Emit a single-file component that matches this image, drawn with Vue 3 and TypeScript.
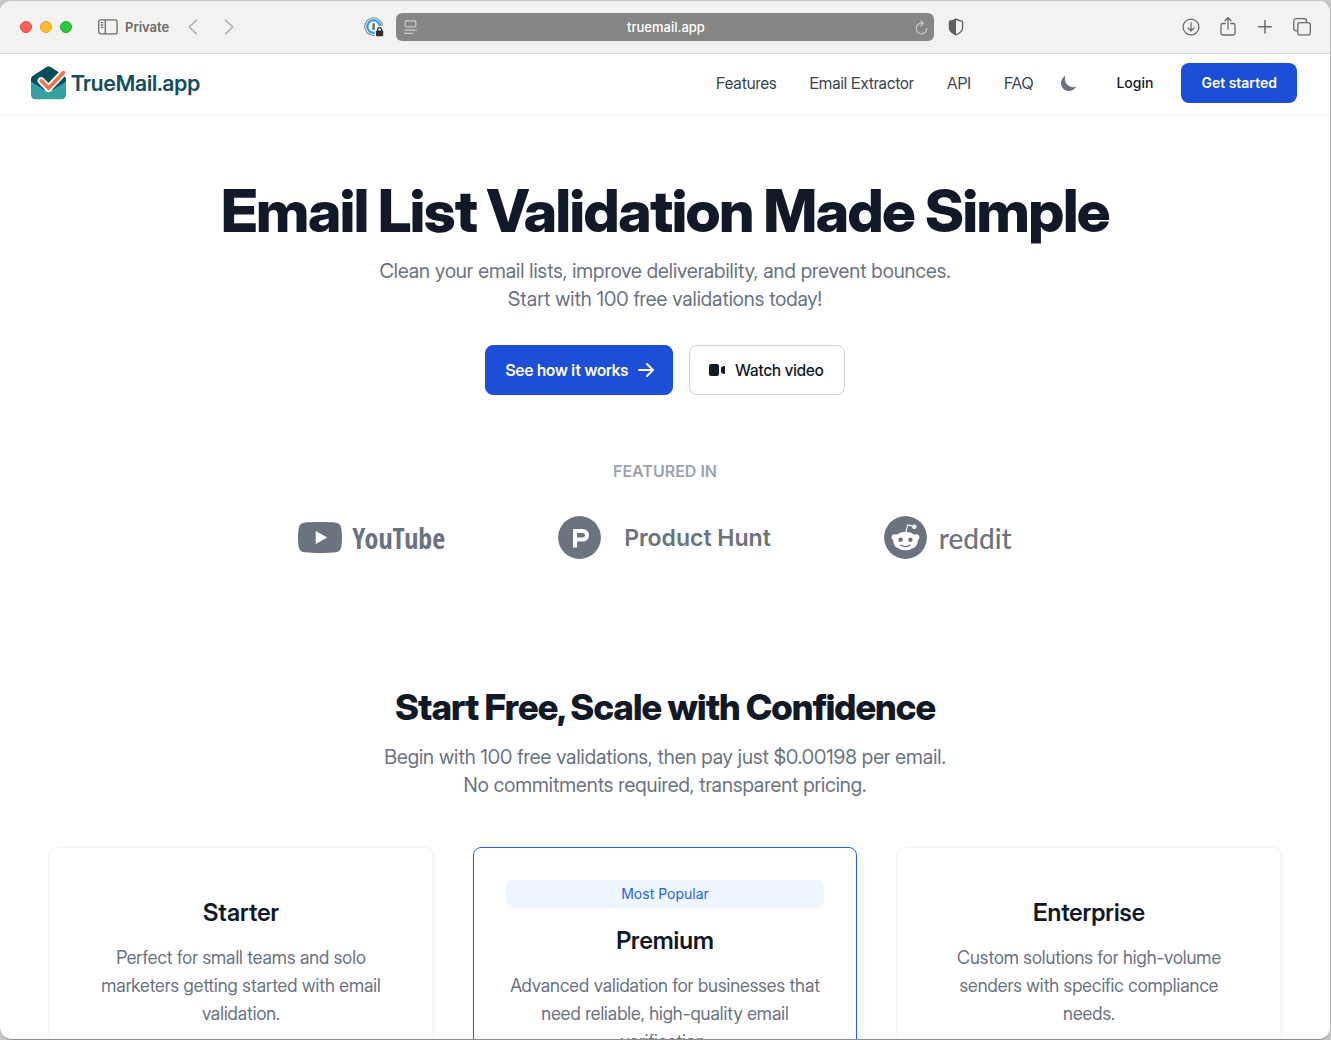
<script setup lang="ts">
interface Plan {
  name: string
  text: string
  badge?: string
}

const links: string[] = ['Features', 'Email Extractor', 'API', 'FAQ']

const plans: Plan[] = [
  { name: 'Starter', text: 'Perfect for small teams and solo marketers getting started with email validation.' },
  {
    name: 'Premium',
    text: 'Advanced validation for businesses that need reliable, high-quality email verification.',
    badge: 'Most Popular',
  },
  { name: 'Enterprise', text: 'Custom solutions for high-volume senders with specific compliance needs.' },
]
</script>

<template>
  <div class="window">
    <div class="toolbar">
      <div class="tools-left">
        <div class="lights">
          <button class="light red" aria-label="Close"></button>
          <button class="light yellow" aria-label="Minimize"></button>
          <button class="light green" aria-label="Zoom"></button>
        </div>
        <button class="tool private">
          <svg width="20" height="16" viewBox="0 0 20 16" fill="none" stroke="#6b6b69" stroke-width="1.3">
            <rect x="0.7" y="0.9" width="18.4" height="14" rx="2.2" />
            <path d="M7.3 1v14M2.8 3.7h2.4M2.8 6h2.4M2.8 8.3h2.4" />
          </svg>
          <span>Private</span>
        </button>
        <button class="tool back" aria-label="Back">
          <svg width="10" height="16" viewBox="0 0 10 16" fill="none" stroke="#b1b1af" stroke-width="1.6" stroke-linecap="round" stroke-linejoin="round">
            <path d="M8.5 1.2 1.2 8l7.3 6.8" />
          </svg>
        </button>
        <button class="tool forward" aria-label="Forward">
          <svg width="10" height="16" viewBox="0 0 10 16" fill="none" stroke="#b1b1af" stroke-width="1.6" stroke-linecap="round" stroke-linejoin="round">
            <path d="m1.5 1.2 7.3 6.8-7.3 6.8" />
          </svg>
        </button>
        <button class="tool extension" aria-label="Password manager">
          <svg width="20" height="20" viewBox="0 0 20 20">
            <circle cx="9.6" cy="9.6" r="8.9" fill="#fff" stroke="#7d8085" stroke-width="1.1" />
            <circle cx="9.6" cy="9.6" r="6.3" fill="none" stroke="#3c9bf4" stroke-width="2.4" />
            <path d="M9.6 6.2v6.8" stroke="#666" stroke-width="2.4" />
            <path d="M10.8 20v-7.8l2.7-3.2H20v11z" fill="#f2f2f0" />
            <rect x="12" y="13.6" width="7.2" height="5.6" rx="1" fill="#2f2f2f" />
            <path d="M13.6 14v-1.4a2 2 0 0 1 4 0V14" fill="none" stroke="#2f2f2f" stroke-width="1.3" />
          </svg>
        </button>
      </div>
      <div class="address">
        <svg width="13" height="15" viewBox="0 0 13 15" fill="none" stroke="#c9c9c7" stroke-width="1.2" stroke-linecap="round">
          <rect x="1.2" y="0.9" width="10.6" height="6" rx="1.4" />
          <path d="M0.7 10.1h11.6M0.7 13.4h7.6" />
        </svg>
        <input type="text" value="truemail.app" aria-label="Address" />
        <button class="tool" aria-label="Reload">
          <svg width="13" height="15" viewBox="0 0 13 15" fill="none" stroke="#c9c9c7" stroke-width="1.2" stroke-linecap="round" stroke-linejoin="round">
            <path d="M11.8 8.3A5.3 5.3 0 1 1 6.5 3.2h1.6M5.7.8l2.6 2.4-2.6 2.6" />
          </svg>
        </button>
      </div>
      <div class="tools-right">
        <button class="tool shield" aria-label="Privacy report">
          <svg width="16" height="18" viewBox="0 0 16 18">
            <path d="M8 1.1c1.7 1.2 3.7 1.9 6 2.1.4 0 .6.3.6.7v6.2c0 2.9-2.4 5-6.6 6.9C3.8 15.1 1.4 13 1.4 10.1V3.9c0-.4.2-.7.6-.7 2.3-.2 4.300-.9 6-2.1z" fill="none" stroke="#5f5f5d" stroke-width="1.3" />
            <path d="M8 1.1V17C3.8 15.1 1.4 13 1.4 10.1V3.9c0-.4.2-.7.6-.7 2.3-.2 4.3-.9 6-2.1z" fill="#5f5f5d" />
          </svg>
        </button>
        <div class="actions">
          <button class="tool" aria-label="Downloads">
            <svg width="18" height="18" viewBox="0 0 18 18" fill="none" stroke="#6b6b69" stroke-width="1.3" stroke-linecap="round" stroke-linejoin="round">
              <circle cx="9" cy="9" r="7.9" />
              <path d="M9 4.8v8M6 10l3 3 3-3" />
            </svg>
          </button>
          <button class="tool" aria-label="Share">
            <svg width="18" height="20" viewBox="0 0 18 20" fill="none" stroke="#6b6b69" stroke-width="1.3" stroke-linecap="round" stroke-linejoin="round">
              <path d="M6.200 6.500H3.800A1.800 1.800 0 0 0 2 8.300v7.900a1.800 1.800 0 0 0 1.800 1.800h10.400a1.800 1.800 0 0 0 1.800-1.800V8.300a1.800 1.800 0 0 0-1.800-1.800h-2.400M9 12V1M6 3.700l3-3 3 3" />
            </svg>
          </button>
          <button class="tool" aria-label="New tab">
            <svg width="18" height="18" viewBox="0 0 18 18" fill="none" stroke="#6b6b69" stroke-width="1.5" stroke-linecap="round">
              <path d="M9 2.5v12.6M2.7 8.8h12.6" />
            </svg>
          </button>
          <button class="tool" aria-label="Tab overview">
            <svg width="18" height="18" viewBox="0 0 18 18" fill="none" stroke="#6b6b69" stroke-width="1.3" stroke-linejoin="round">
              <rect x="4.8" y="4.7" width="12.5" height="12.2" rx="2.2" />
              <path d="M4.8 12.9H3a2.2 2.2 0 0 1-2.200-2.200V2.900A2.200 2.200 0 0 1 3 .7h8.300a2.200 2.200 0 0 1 2.200 2.200v1.800" />
            </svg>
          </button>
        </div>
      </div>
    </div>

    <header class="header">
      <a class="brand" href="#">
        <svg width="36" height="34" viewBox="0 0 36 34">
          <path d="M0 13.5c0-1.800.6-2.800 2-3.700L15.500 1a4 4 0 0 1 4.300 0L33 9.800c1.400.9 2 1.900 2 3.700V24H0z" fill="#07505b" />
          <path d="M0 15.500 17.500 26.600 35 15.500V29a4.200 4.200 0 0 1-4.200 4.200H4.200A4.200 4.200 0 0 1 0 29z" fill="#37a0a3" />
          <path d="m10.200 14.800 7.300 7.400L32.500 6.600" fill="none" stroke="#fff" stroke-width="7.200" stroke-linecap="round" stroke-linejoin="round" />
          <path d="m10.200 14.800 7.300 7.400L32.500 6.600" fill="none" stroke="#f9703e" stroke-width="3.600" stroke-linecap="round" />
        </svg>
        <span>TrueMail.app</span>
      </a>
      <div class="menu">
        <nav>
          <a v-for="link in links" :key="link" href="#">{{ link }}</a>
        </nav>
        <button class="theme" aria-label="Dark mode">
          <svg width="20" height="20" viewBox="0 0 20 20" fill="#6b7280">
            <path d="M17.293 13.293A8 8 0 0 1 6.707 2.707a8.001 8.001 0 1 0 10.586 10.586z" />
          </svg>
        </button>
        <a class="login" href="#">Login</a>
        <a class="start" href="#">Get started</a>
      </div>
    </header>

    <main>
      <section class="hero">
        <h1>Email List Validation Made Simple</h1>
        <p class="lead">Clean your email lists, improve deliverability, and prevent bounces.<br />Start with 100 free validations today!</p>
        <div class="buttons">
          <a class="button primary" href="#">
            See how it works
            <svg width="20" height="20" viewBox="0 0 20 20" fill="currentColor">
              <path fill-rule="evenodd" d="M10.293 3.293a1 1 0 0 1 1.414 0l6 6a1 1 0 0 1 0 1.414l-6 6a1 1 0 0 1-1.414-1.414L14.586 11H3a1 1 0 1 1 0-2h11.586l-4.293-4.293a1 1 0 0 1 0-1.414z" />
            </svg>
          </a>
          <a class="button" href="#">
            <svg width="20" height="20" viewBox="0 0 20 20" fill="currentColor">
              <rect x="2" y="4" width="10" height="12" rx="2" />
              <path d="M14.553 7.106A1 1 0 0 0 14 8v4a1 1 0 0 0 .553.894l2 1A1 1 0 0 0 18 13V7a1 1 0 0 0-1.447-.894z" />
            </svg>
            Watch video
          </a>
        </div>
        <div class="featured">FEATURED IN</div>
        <div class="logos">
          <a class="logo youtube" href="#">
            <svg width="44" height="31" viewBox="0 0 44 31">
              <path fill-rule="evenodd" d="M22 0c8 0 14 .3 17 1 2 .5 3.400 2 3.900 4 .8 3 1.100 6.500 1.100 10.500S43.700 23 42.900 26c-.5 2-1.900 3.500-3.900 4-3 .7-9 1-17 1S8 30.700 5 30c-2-.5-3.400-2-3.900-4C.3 23 0 19.500 0 15.500S.3 8 1.100 5C1.600 3 3 1.500 5 1c3-.7 9-1 17-1zm-4.300 9v13l11.500-6.500z" fill="#6b7280" />
            </svg>
            <span>YouTube</span>
          </a>
          <a class="logo hunt" href="#">
            <svg width="43" height="43" viewBox="0 0 43 43">
              <circle cx="21.5" cy="21.5" r="21.4" fill="#6b7280" />
              <path fill-rule="evenodd" d="M15 13h9.700a6.300 6.300 0 0 1 0 12.600H19v6h-4zm4 4v4.600h5.700a2.300 2.300 0 0 0 0-4.600z" fill="#fff" />
            </svg>
            <span>Product Hunt</span>
          </a>
          <a class="logo reddit" href="#">
            <svg width="43" height="43" viewBox="0 0 43 43">
              <circle cx="21.5" cy="21.5" r="21.4" fill="#6b7280" />
              <g fill="#fff">
                <ellipse cx="21.5" cy="25" rx="12.3" ry="9.3" />
                <circle cx="10.7" cy="21.3" r="3.1" />
                <circle cx="32.3" cy="21.3" r="3.1" />
                <circle cx="30.3" cy="10.8" r="2.2" />
              </g>
              <path d="m21.700 16.500 2-7.600 6.200 1.600" fill="none" stroke="#fff" stroke-width="1.1" stroke-linejoin="round" />
              <g fill="#6b7280">
                <circle cx="16.6" cy="23.7" r="2.2" />
                <circle cx="26.4" cy="23.7" r="2.2" />
              </g>
              <path d="M16.700 29c2.700 2.100 6.900 2.100 9.600 0" fill="none" stroke="#6b7280" stroke-width="1.2" stroke-linecap="round" />
            </svg>
            <span>reddit</span>
          </a>
        </div>
      </section>

      <section class="pricing">
        <h2>Start Free, Scale with Confidence</h2>
        <p class="lead">Begin with 100 free validations, then pay just $0.00198 per email.<br />No commitments required, transparent pricing.</p>
        <div class="cards">
          <article v-for="plan in plans" :key="plan.name" class="card" :class="{ popular: plan.badge }">
            <span v-if="plan.badge" class="badge">{{ plan.badge }}</span>
            <h3>{{ plan.name }}</h3>
            <p>{{ plan.text }}</p>
          </article>
        </div>
      </section>
    </main>
  </div>
</template>

<style>
body {
  background: #c6c6c6;
}
</style>

<style scoped>
.window {
  box-sizing: border-box;
  height: 100vh;
  overflow: hidden;
  border: 1px solid #c4c4c4;
  border-left: 0;
  border-right-color: #b5b5b5;
  border-bottom-color: #8d8d8d;
  border-radius: 12px;
  background: #fff;
  color: #111827;
  font-family: "Inter Display", Inter, "Liberation Sans", sans-serif;
  font-size: 16px;
  line-height: 24px;
}
h1, h2, h3, p {
  margin: 0;
}
a {
  color: inherit;
  text-decoration: none;
}
svg {
  display: block;
  flex: none;
}
.toolbar {
  display: grid;
  grid-template-columns: 1fr minmax(0, 538px) 1fr;
  align-items: center;
  height: 52px;
  border-bottom: 1px solid #d6d6d4;
  background: #f2f2f0;
}
.tool {
  display: flex;
  align-items: center;
  padding: 0;
  border: 0;
  background: none;
  color: #6b6b69;
  font: 600 13px/16px Inter, sans-serif;
}
.tools-left {
  display: flex;
  align-items: center;
  padding: 0 12px 0 20px;
}
.lights {
  display: flex;
  gap: 8px;
  margin-right: 26px;
}
.light {
  box-sizing: border-box;
  width: 12px;
  height: 12px;
  padding: 0;
  border: 1px solid;
  border-radius: 50%;
}
.red {
  border-color: #e2463f;
  background: #ff5f57;
}
.yellow {
  border-color: #e1a325;
  background: #febc2e;
}
.green {
  border-color: #1dad2b;
  background: #28c840;
}
.private {
  gap: 7px;
}
.back {
  margin-left: 19px;
}
.forward {
  margin-left: 26px;
}
.extension {
  margin-left: auto;
}
.address {
  display: flex;
  align-items: center;
  box-sizing: border-box;
  height: 28px;
  padding: 0 6px 0 8px;
  border-radius: 6px;
  background: #868684;
}
.address input {
  flex: 1;
  min-width: 0;
  padding: 0;
  border: 0;
  outline: 0;
  background: none;
  color: #fff;
  font: 500 13px/16px Inter, sans-serif;
  text-align: center;
}
.tools-right {
  display: flex;
  align-items: center;
  justify-content: space-between;
  padding: 0 19px 0 14px;
}
.actions {
  display: flex;
  align-items: center;
  gap: 19px;
}
.header {
  display: flex;
  align-items: center;
  justify-content: space-between;
  padding: 9px 33px 10px 31px;
  border-bottom: 4px solid #f9fafb;
}
.brand {
  display: flex;
  align-items: center;
  gap: 4px;
  color: #124e5b;
  font-weight: 600;
  font-size: 22px;
}
.menu,
nav {
  display: flex;
  align-items: center;
}
nav {
  gap: 33px;
  color: #374151;
}
.theme {
  margin: 0 7px 0 16px;
  padding: 10px;
  border: 0;
  background: none;
}
.login,
.start {
  padding: 10px 20px;
  border-radius: 8px;
  font: 500 14px/20px Inter, sans-serif;
}
.start {
  margin-left: 8px;
  background: #1d4ed8;
  color: #fff;
  font-weight: 600;
}
.hero,
.pricing {
  display: flex;
  flex-direction: column;
  align-items: center;
  text-align: center;
}
.hero {
  padding-top: 64px;
}
h1 {
  font-size: 59px;
  line-height: 60px;
  font-weight: 800;
  letter-spacing: -0.025em;
}
.lead {
  margin-top: 16px;
  color: #6b7280;
  font-size: 20px;
  line-height: 28px;
}
.buttons {
  display: flex;
  gap: 16px;
  margin-top: 32px;
}
.button {
  display: flex;
  align-items: center;
  gap: 8px;
  padding: 12px 20px 12px 17px;
  border: 1px solid #d1d5db;
  border-radius: 8px;
  font-weight: 500;
}
.primary {
  padding: 12px 16px 12px 19px;
  border-color: #1d4ed8;
  background: #1d4ed8;
  color: #fff;
  font-weight: 600;
}
.featured {
  margin-top: 64px;
  color: #9ca3af;
  font-family: Inter, sans-serif;
  font-weight: 600;
}
.logos {
  display: flex;
  align-items: center;
  gap: 113px;
  margin: 33px 20px 0 0;
  color: #6b7280;
}
.logo {
  display: flex;
  align-items: center;
}
.youtube {
  gap: 10px;
  font: 600 28px/42px "Open Sans Condensed", "Roboto Condensed", sans-serif;
}
.hunt {
  gap: 23px;
  font: 600 23px/42px Inter, sans-serif;
}
.reddit {
  gap: 12px;
  font: 500 28px/42px Lato, sans-serif;
}
.pricing {
  padding: 128px 49px 0;
}
h2 {
  font-size: 36px;
  line-height: 40px;
  font-weight: 800;
  letter-spacing: -0.025em;
}
.cards {
  display: grid;
  grid-template-columns: repeat(3, minmax(0, 1fr));
  gap: 40px;
  width: 100%;
  margin-top: 48px;
}
.card {
  display: flex;
  flex-direction: column;
  padding: 32px;
  border: 1px solid #f3f4f6;
  border-radius: 8px;
  box-shadow: 0 1px 3px #0000001a;
}
.popular {
  border-color: #2563eb;
}
.badge {
  padding: 4px;
  border-radius: 8px;
  background: #eff6ff;
  color: #2563eb;
  font: 400 14px/20px Inter, sans-serif;
}
h3 {
  margin: 17px 0 15px;
  font-size: 24px;
  line-height: 32px;
  font-weight: 600;
}
.card p {
  padding: 0 2px;
  color: #6b7280;
  font-size: 18px;
  line-height: 28px;
}
</style>
